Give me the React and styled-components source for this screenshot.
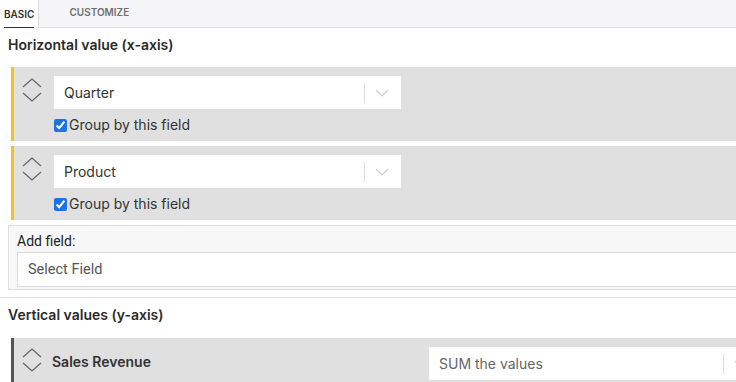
import React from 'react';
import styled, { createGlobalStyle } from 'styled-components';

const GlobalStyle = createGlobalStyle`
  html, body {
    margin: 0;
    padding: 0;
    background: #fff;
    overflow: hidden;
  }
  body {
    font-family: Inter, "Noto Sans", sans-serif;
    color: #333;
  }
`;

const Page = styled.div`
  width: 760px;
`;

const TabBar = styled.div`
  display: flex;
  height: 28px;
  background: #f5f5f7;
  border-bottom: 1px solid #dcdcdc;
  box-sizing: border-box;
`;

const Tab = styled.div`
  display: flex;
  align-items: center;
  justify-content: center;
  height: 28px;
  box-sizing: border-box;
  padding: 0 ${(p) => (p.active ? '4px' : '30px')};
  font-size: 10px;
  font-weight: 600;
  color: ${(p) => (p.active ? '#333' : '#707070')};
  background: ${(p) => (p.active ? '#fff' : 'transparent')};
  border-right: ${(p) => (p.active ? '1px solid #dcdcdc' : 'none')};
  span {
    display: block;
    padding-bottom: 1px;
    border-bottom: ${(p) => (p.active ? '1.5px solid #333' : 'none')};
    line-height: 24px;
    margin-top: ${(p) => (p.active ? '1px' : '-3px')};
  }
`;

const SectionTitle = styled.h3`
  margin: 0;
  padding: 8px 8px 0;
  height: ${(p) => p.$height || '39px'};
  box-sizing: border-box;
  font-size: 14px;
  line-height: 18px;
  font-weight: 600;
  color: #2b2b2b;
`;

const FieldCard = styled.div`
  display: flex;
  align-items: flex-start;
  gap: ${(p) => p.$gap || '12px'};
  margin: 0 0 5px 11px;
  padding: ${(p) => p.$padding || '9px 0 8px 8px'};
  background: #e0e0e0;
  border-left: 3px solid ${(p) => p.$accent || '#f5c21b'};
`;

const Mover = styled.div`
  width: 20px;
  display: flex;
  flex-direction: column;
  gap: 4px;
  padding-top: ${(p) => p.$top || '2px'};
  svg {
    display: block;
  }
`;

const FieldBody = styled.div`
  display: flex;
  flex-direction: column;
  gap: 8px;
`;

const Select = styled.div`
  display: flex;
  align-items: center;
  width: ${(p) => p.$width || '347px'};
  height: 33px;
  background: #fff;
  box-sizing: border-box;
  padding-left: 10px;
  font-size: 14px;
  color: ${(p) => (p.$muted ? '#666' : '#333')};
  margin-left: ${(p) => (p.$push ? 'auto' : '0')};
`;

const SelectText = styled.div`
  flex: 1;
`;

const Indicator = styled.div`
  display: flex;
  align-items: center;
  height: 20px;
  border-left: 1px solid #ddd;
  padding: 0 12px 0 10px;
`;

const CheckRow = styled.label`
  display: flex;
  align-items: center;
  gap: 2px;
  font-size: 14px;
  line-height: 16px;
  color: #333;
  input {
    margin: 0;
    width: 13px;
    height: 13px;
    accent-color: #1a73e8;
  }
`;

const AddBox = styled.div`
  margin: 0 0 0 8px;
  padding: 7px 0 2px 8px;
  background: #f7f7f7;
  border: 1px solid #dedede;
  border-right: none;
`;

const AddLabel = styled.div`
  font-size: 14px;
  line-height: 16px;
  color: #222;
  font-family: Roboto, "Noto Sans", sans-serif;
  margin-bottom: 3px;
`;

const AddInput = styled.div`
  height: 35px;
  box-sizing: border-box;
  display: flex;
  align-items: center;
  padding-left: 10px;
  background: #fff;
  border: 1px solid #dcdcdc;
  border-right: none;
  font-family: Roboto, "Noto Sans", sans-serif;
  font-size: 14.5px;
  color: #555;
`;

const Divider = styled.div`
  height: 1px;
  background: #dcdcdc;
  margin-top: 7px;
`;

const Measure = styled.div`
  padding-top: 6px;
  font-size: 14px;
  line-height: 17px;
  font-weight: 600;
  color: #333;
`;

const Chevrons = ({ color = '#666' }) => (
  <>
    <svg width="20" height="10" viewBox="0 0 20 10">
      <polyline points="1,9 10,1 19,9" fill="none" stroke={color} strokeWidth="1.3" />
    </svg>
    <svg width="20" height="10" viewBox="0 0 20 10">
      <polyline points="1,1 10,9 19,1" fill="none" stroke={color} strokeWidth="1.3" />
    </svg>
  </>
);

const Caret = () => (
  <svg width="14" height="8" viewBox="0 0 14 8">
    <polyline points="1,1 7,7 13,1" fill="none" stroke="#ccc" strokeWidth="1.2" />
  </svg>
);

const DimensionField = ({ name }) => (
  <FieldCard>
    <Mover>
      <Chevrons />
    </Mover>
    <FieldBody>
      <Select>
        <SelectText>{name}</SelectText>
        <Indicator>
          <Caret />
        </Indicator>
      </Select>
      <CheckRow>
        <input type="checkbox" defaultChecked readOnly />
        Group by this field
      </CheckRow>
    </FieldBody>
  </FieldCard>
);

const App = () => (
  <Page>
    <GlobalStyle />
    <TabBar>
      <Tab active>
        <span>BASIC</span>
      </Tab>
      <Tab>
        <span>CUSTOMIZE</span>
      </Tab>
    </TabBar>
    <SectionTitle>Horizontal value (x-axis)</SectionTitle>
    <DimensionField name="Quarter" />
    <DimensionField name="Product" />
    <AddBox>
      <AddLabel>Add field:</AddLabel>
      <AddInput>Select Field</AddInput>
    </AddBox>
    <Divider />
    <SectionTitle $height="40px">Vertical values (y-axis)</SectionTitle>
    <FieldCard $accent="#555" $gap="10px" $padding="9px 0 9px 8px">
      <Mover $top="1px">
        <Chevrons />
      </Mover>
      <Measure>Sales Revenue</Measure>
      <Select $width="331px" $muted $push>
        <SelectText>SUM the values</SelectText>
        <Indicator>
          <Caret />
        </Indicator>
      </Select>
    </FieldCard>
  </Page>
);

export default App;
